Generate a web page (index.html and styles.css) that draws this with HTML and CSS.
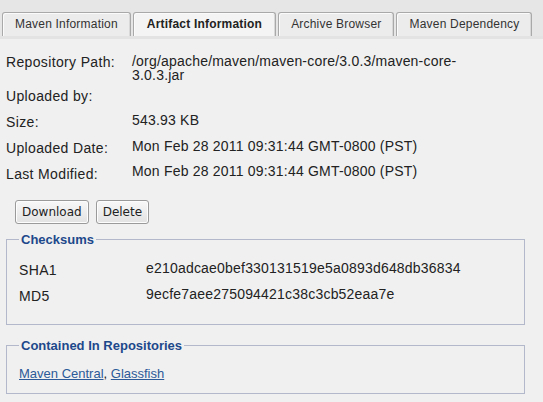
FILE: index.html
```html
<!DOCTYPE html>
<html>
<head>
<meta charset="utf-8">
<link rel="stylesheet" href="styles.css">
</head>
<body>
<div class="tabbar">
  <div class="tab">Maven Information</div>
  <div class="tab active">Artifact Information</div>
  <div class="tab">Archive Browser</div>
  <div class="tab">Maven Dependency</div>
</div>
<div class="content">
  <div class="details">
    <div class="row row-multi"><div class="label">Repository Path:</div><div class="value">/org/apache/maven/maven-core/3.0.3/maven-core-<br>3.0.3.jar</div></div>
    <div class="row"><div class="label">Uploaded by:</div><div class="value"></div></div>
    <div class="row"><div class="label">Size:</div><div class="value">543.93 KB</div></div>
    <div class="row"><div class="label">Uploaded Date:</div><div class="value">Mon Feb 28 2011 09:31:44 GMT-0800 (PST)</div></div>
    <div class="row"><div class="label">Last Modified:</div><div class="value">Mon Feb 28 2011 09:31:44 GMT-0800 (PST)</div></div>
  </div>
  <div class="buttons">
    <button class="btn">Download</button>
    <button class="btn">Delete</button>
  </div>
  <fieldset class="group checksums">
    <legend>Checksums</legend>
    <div class="row"><div class="label">SHA1</div><div class="value">e210adcae0bef330131519e5a0893d648db36834</div></div>
    <div class="row"><div class="label">MD5</div><div class="value">9ecfe7aee275094421c38c3cb52eaa7e</div></div>
  </fieldset>
  <fieldset class="group repos">
    <legend>Contained In Repositories</legend>
    <div class="links"><a href="#">Maven Central</a>, <a href="#">Glassfish</a></div>
  </fieldset>
</div>
</body>
</html>
```
FILE: styles.css
```css
html, body {
  margin: 0;
  padding: 0;
}
body {
  background: #f0f0f0;
  font-family: "Liberation Sans", Arial, sans-serif;
  color: #222;
  width: 543px;
  height: 402px;
  overflow: hidden;
}
.tabbar {
  display: flex;
  align-items: flex-end;
  gap: 2px;
  background: #e6e6e6;
  padding: 12px 0 0 2px;
  border-bottom: 3px solid #e3e3e3;
  height: 24px;
}
.tab {
  box-sizing: border-box;
  height: 24px;
  line-height: 22px;
  font-size: 12px;
  letter-spacing: 0.2px;
  padding: 0 12px;
  border: 1px solid #a9a9a9;
  border-bottom: none;
  border-radius: 3px 3px 0 0;
  background: #ececec;
  box-shadow: inset 1px 1px 0 #fbfbfb, inset -1px 0 0 #d8d8d8;
  color: #333;
}
.tab.active {
  background: #f4f4f4;
  font-weight: bold;
  letter-spacing: 0.2px;
  color: #222;
  padding: 0 13px;
}
.content {
  padding: 14.5px 18px 0 6px;
}
.row {
  display: grid;
  grid-template-columns: 126px 1fr;
  padding-bottom: 12.7px;
  font-size: 14px;
  line-height: 13px;
}
.value {
  letter-spacing: 0.2px;
}
.row-multi {
  padding-bottom: 6.7px;
}
.row-multi .value {
  line-height: 14px;
}
.label {
  margin-top: 2.3px;
  margin-bottom: -2.3px;
  letter-spacing: 0.35px;
}
.buttons {
  display: flex;
  gap: 7px;
  padding-left: 9px;
  margin-top: 9px;
}
.btn {
  font-family: "DejaVu Sans", sans-serif;
  font-size: 12px;
  color: #222;
  height: 24px;
  padding: 0 6px;
  border: 1px solid #9a9a9a;
  border-radius: 3px;
  background: linear-gradient(#f8f8f8, #e2e2e2);
  box-shadow: inset 0 0 0 1px #fdfdfd;
}
.group {
  margin: 8px 0 0 0;
  padding: 15px 12px 11px 12px;
  border: 1px solid #b4b8cb;
}
.group legend {
  padding: 0 2px;
  font-size: 13px;
  line-height: 15px;
  font-weight: bold;
  color: #1d488b;
}
.group .row {
  grid-template-columns: 127px 1fr;
}
.checksums .row:last-child {
  padding-bottom: 12px;
}
.repos {
  margin-top: 13px;
  padding: 13px 12px 12px 12px;
}
.links {
  font-size: 13px;
  line-height: 15px;
}
.links a {
  color: #2c5a98;
  text-decoration: underline;
}
```
